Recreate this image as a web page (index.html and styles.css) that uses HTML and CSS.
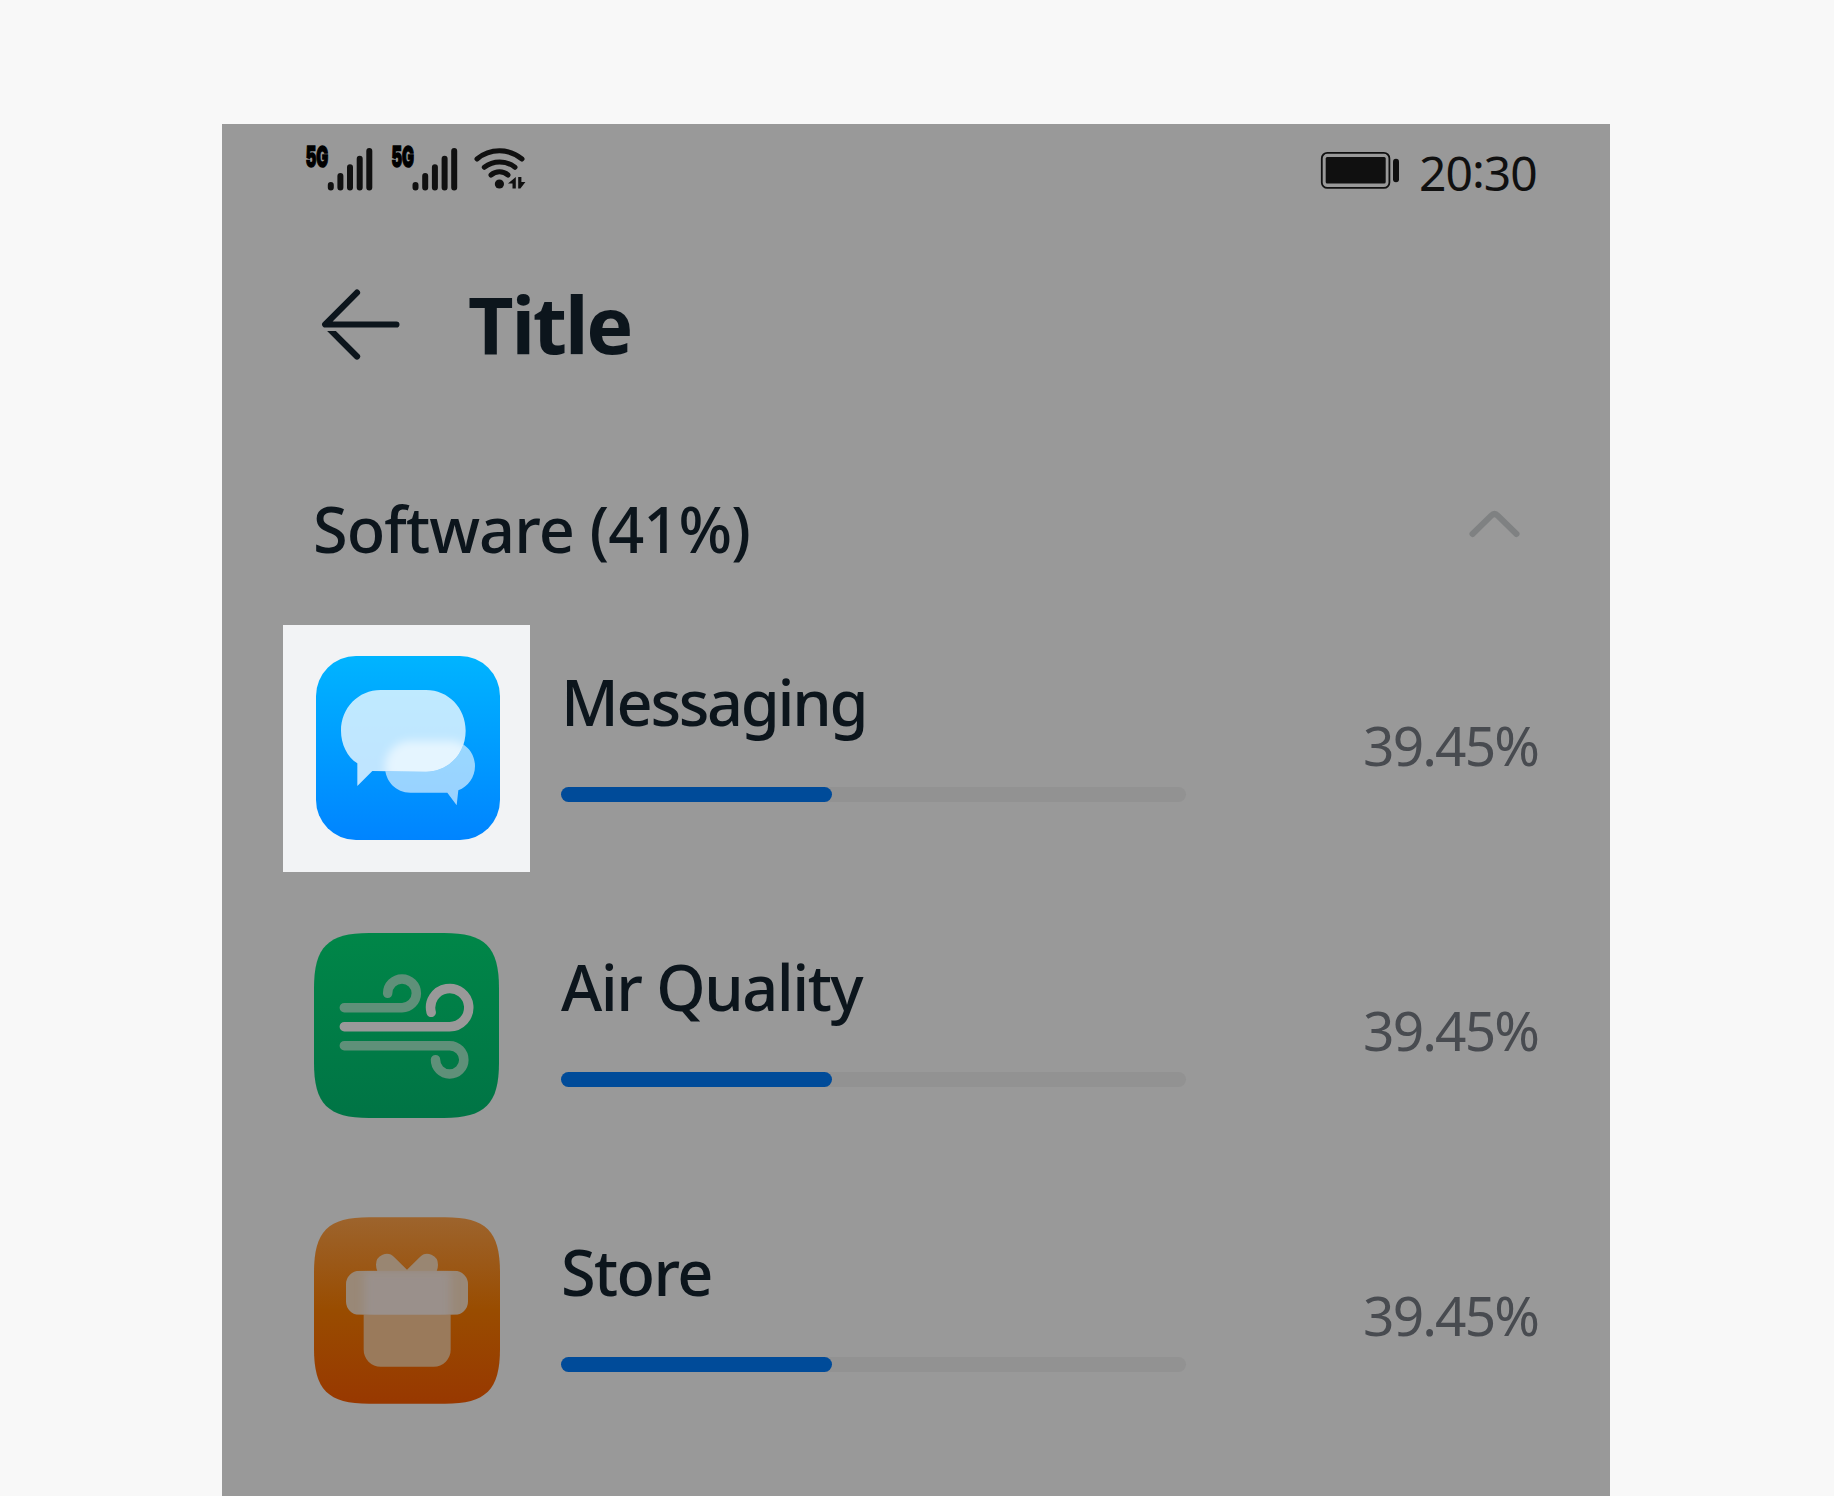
FILE: index.html
```html
<!DOCTYPE html>
<html lang="en">
<head>
<meta charset="utf-8">
<title>Power usage</title>
<link rel="stylesheet" href="styles.css">
</head>
<body>
<main class="screen">
  <header class="status">
    <svg class="status-signals" viewBox="300 140 232 56">
      <g class="network">
        <text x="305.8" y="167" textLength="22.5" lengthAdjust="spacingAndGlyphs">5G</text>
        <text x="391.5" y="167" textLength="22.5" lengthAdjust="spacingAndGlyphs">5G</text>
      </g>
      <g class="line6">
        <path d="M330.8 185v2.6M340.4 176v11.6M350 167.300v20.300M359.700 158.700v28.900M369.300 151v36.600"/>
        <path d="M415.500 185v2.600M425.200 176v11.600M434.900 167.300v20.300M444.600 158.700v28.900M454.200 151v36.600"/>
      </g>
      <g class="line5">
        <path d="M477 159A35 35 0 0 1 522 159M484.300 167.300A25 25 0 0 1 515 167.300M491 175A13 13 0 0 1 508 175"/>
      </g>
      <circle cx="499.400" cy="184" r="4.600"/>
      <path d="M515.800 177v11.500h-3.300v-5h-4.500zM518.200 177h3.200v5h4l-5 6.500h-2.200z"/>
    </svg>
    <div class="status-right">
      <svg class="battery" viewBox="1320 151 80 39">
        <rect class="battery-shell" x="1321.800" y="152.900" width="67.600" height="35" rx="5.500"/>
        <rect x="1325.700" y="157" width="60" height="26.600" rx="1.500"/>
        <rect x="1393" y="158.700" width="6" height="23.500" rx="3"/>
      </svg>
      <time class="clock">20<span class="colon">:</span>30</time>
    </div>
  </header>

  <div class="titlebar">
    <svg class="back" viewBox="320 286 82 76">
      <clipPath id="lower"><path d="M320 331h82v31h-82z"/></clipPath>
      <path d="M357 292.600L325.200 324.500H396.400"/>
      <path clip-path="url(#lower)" d="M325 324.500L357 356.500"/>
    </svg>
    <h1>Title</h1>
  </div>

  <section>
    <div class="group">
      <h2>Software (41%)</h2>
      <svg class="chevron" viewBox="1468 508 53 32"><path d="M1472.500 534L1491 515.800Q1494.500 512.300 1498 515.800L1516.500 534"/></svg>
    </div>

    <ul class="apps">
      <li class="app">
        <div class="icon-cell spotlight">
          <svg class="icon-message" viewBox="138 138 552 552">
            <defs>
              <linearGradient id="blue" x2="0" y2="1"><stop stop-color="#00b4ff"/><stop offset="1" stop-color="#0084ff"/></linearGradient>
              <path id="big" d="M332 240H468C535 240 587 294 587 362S535 485 468 485L307 483 262 528V460C231 440 213 402 213 362C213 294 265 240 332 240Z"/>
              <path id="small" d="M421 392H540C582 392 615 425 615 468C615 502 594 530 565 541L560 586 532 548H421C378 548 345 513 345 470S378 392 421 392Z"/>
              <clipPath id="inbig"><use href="#big"/></clipPath>
              <mask id="outbig" maskUnits="userSpaceOnUse" x="138" y="138" width="552" height="552"><path fill="#fff" d="M138 138h552v552H138z"/><use href="#big" fill="#000"/></mask>
              <filter id="soft" x="-20%" y="-20%" width="140%" height="140%"><feGaussianBlur stdDeviation="14"/></filter>
            </defs>
            <rect x="138" y="138" width="552" height="552" rx="120" fill="url(#blue)"/>
            <g mask="url(#outbig)"><use href="#small" fill="#fff" opacity=".6"/></g>
            <g clip-path="url(#inbig)"><use href="#small" fill="#fff" opacity=".6" filter="url(#soft)"/></g>
            <use href="#big" fill="#fff" opacity=".75"/>
          </svg>
        </div>
        <div class="usage">
          <h3 class="name-messaging">Messaging</h3>
          <div class="track"><div class="fill"></div></div>
        </div>
        <span class="percent">39.45%</span>
      </li>
      <li class="app">
        <div class="icon-cell">
          <svg class="icon-air" viewBox="43 39 555 555">
            <linearGradient id="green" x2="0" y2="1"><stop stop-color="#008648"/><stop offset="1" stop-color="#007445"/></linearGradient>
            <path fill="url(#green)" d="M43 204C43 81 85 39 208 39H433C556 39 598 81 598 204V429C598 552 556 594 433 594H208C85 594 43 552 43 429Z"/>
            <g class="wind">
              <path class="faint" d="M134 263H307A43 43 0 1 0 264 220"/>
              <path d="M134 320H450A57.300 57.300 0 1 0 394.500 277"/>
              <path class="faint" d="M134 377H450A42.500 42.500 0 1 1 407.500 419"/>
            </g>
          </svg>
        </div>
        <div class="usage">
          <h3 class="name-air">Air Quality</h3>
          <div class="track"><div class="fill"></div></div>
        </div>
        <span class="percent">39.45%</span>
      </li>
      <li class="app">
        <div class="icon-cell">
          <svg class="icon-store" viewBox="42 37 558 560">
            <defs>
              <linearGradient id="orange" x2="0" y2="1"><stop stop-color="#9d642d"/><stop offset=".5" stop-color="#994c00"/><stop offset="1" stop-color="#983800"/></linearGradient>
              <clipPath id="lid"><rect x="138" y="198" width="366" height="132" rx="40"/></clipPath>
              <filter id="haze" x="-20%" y="-20%" width="140%" height="140%"><feGaussianBlur stdDeviation="12"/></filter>
            </defs>
            <path fill="url(#orange)" d="M42 202C42 79 84 37 207 37H435C558 37 600 79 600 202V432C600 555 558 597 435 597H207C84 597 42 555 42 432Z"/>
            <path fill="#998672" d="M232 199Q228 190 228 180A32 32 0 0 1 283 157L321 195L359 157A32 32 0 0 1 414 180Q414 190 410 199Z"/>
            <path fill="#9a7a5b" d="M191 329H452V434A51 51 0 0 1 401 486H242A51 51 0 0 1 191 434Z"/>
            <g clip-path="url(#lid)">
              <path fill="#998877" d="M138 198h366v132H138z"/>
              <path fill="#9a908b" filter="url(#haze)" d="M192 196h260v180H192z"/>
            </g>
          </svg>
        </div>
        <div class="usage">
          <h3 class="name-store">Store</h3>
          <div class="track"><div class="fill"></div></div>
        </div>
        <span class="percent">39.45%</span>
      </li>
    </ul>
  </section>
</main>
</body>
</html>
```
FILE: styles.css
```css
* { box-sizing: border-box; margin: 0; padding: 0; }
html, body { height: 100%; overflow: hidden; }
body {
  background: #f8f8f8;
  padding: 124px 224px 0 222px;
  font-family: "Noto Sans", "Open Sans", sans-serif;
  color: #0c151c;
}
svg { display: block; flex: none; }
.screen { height: 1372px; background: #999; overflow: hidden; }

.status { height: 112px; padding: 16px 74px 0 78px; display: flex; justify-content: space-between; align-items: flex-start; color: #101010; }
.status svg { fill: #101010; }
.status-signals { width: 232px; height: 56px; }
.network { font: 900 28px Inter, sans-serif; fill: #000; stroke: #000; stroke-width: 1.500; }
.line6, .line5 { fill: none; stroke: #101010; stroke-linecap: round; }
.line6 { stroke-width: 6; }
.line5 { stroke-width: 5; }
.status-right { display: flex; }
.battery { width: 80px; height: 39px; margin-top: 11px; }
.battery .battery-shell { fill: none; stroke: #101010; stroke-width: 1.800; }
.clock { width: 117px; margin-left: 19px; padding-top: 1px; font-size: 48px; line-height: 64px; white-space: nowrap; letter-spacing: -1px; }
.colon { position: relative; top: -3px; }

.titlebar { height: 200px; padding: 50px 0 0 98px; display: flex; }
.back { width: 82px; height: 76px; fill: none; stroke: #0c151c; stroke-width: 6.200; stroke-linecap: round; stroke-linejoin: round; }
h1 { margin-left: 66px; font-size: 79px; line-height: 76px; font-weight: 700; white-space: nowrap; letter-spacing: -2.200px; }

.group { height: 189px; padding: 52px 89px 0 91px; display: flex; justify-content: space-between; }
h2 { padding-top: 1px; font-size: 63px; line-height: 80px; font-weight: 500; white-space: nowrap; letter-spacing: -.900px; }
.chevron { width: 53px; height: 32px; margin-top: 20px; fill: none; stroke: #7f8182; stroke-width: 6; stroke-linecap: round; }

.apps { list-style: none; display: grid; gap: 38px; }
.app { height: 247px; padding: 0 72px 0 61.400px; display: grid; grid-template-columns: 247px 625px 1fr; column-gap: 30.600px; }
.icon-cell { padding: 23px 0 0 31px; }
.spotlight { background: #f2f3f5; padding: 31px 0 0 32.600px; }
.icon-message { width: 184px; height: 184px; }
.icon-air { width: 185px; height: 185px; }
.icon-store { width: 186px; height: 187px; margin-top: -1px; }
.wind { fill: none; stroke: #999; stroke-width: 28.500; stroke-linecap: round; }
.wind .faint { stroke: #5f9079; }
.usage { padding-top: 37px; }
h3 { font-size: 63px; line-height: 80px; height: 125px; font-weight: 500; white-space: nowrap; }
.name-messaging { letter-spacing: -2.300px; }
.name-air { letter-spacing: -1.500px; }
.name-store { letter-spacing: -1.600px; }
.track { height: 15px; border-radius: 8px; background: #929292; }
.fill { width: 271px; height: 15px; border-radius: 8px; background: #004b99; }
.percent { justify-self: end; padding-top: 80px; font-size: 55px; line-height: 80px; color: #484b50; white-space: nowrap; letter-spacing: -1.900px; }
```
